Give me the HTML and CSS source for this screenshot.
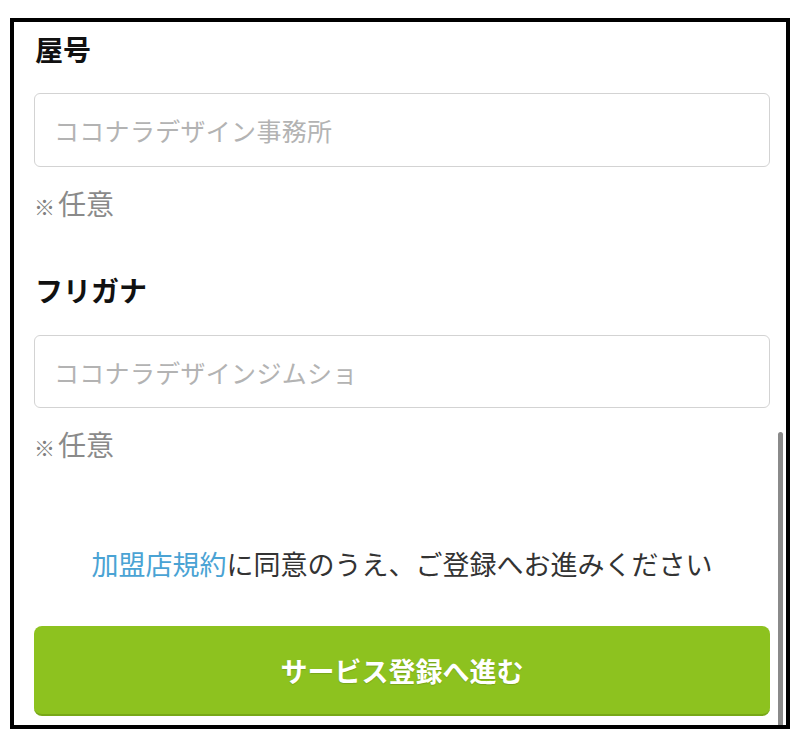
FILE: index.html
```html
<!DOCTYPE html>
<html lang="ja">
<head>
<meta charset="utf-8">
<link rel="stylesheet" href="styles.css">
<title>登録</title>
</head>
<body>
<div class="frame">
  <div class="content">
    <div class="label first">屋号</div>
    <div class="input"><span class="placeholder">ココナラデザイン事務所</span></div>
    <div class="note"><span class="mark">※</span>任意</div>

    <div class="label second">フリガナ</div>
    <div class="input"><span class="placeholder">ココナラデザインジムショ</span></div>
    <div class="note"><span class="mark">※</span>任意</div>

    <p class="terms"><a class="link" href="#">加盟店規約</a>に同意のうえ、ご登録へお進みください</p>
    <div class="button">サービス登録へ進む</div>
  </div>
  <div class="scrollbar"></div>
</div>
</body>
</html>
```
FILE: styles.css
```css
html, body {
  margin: 0;
  padding: 0;
  background: #ffffff;
}
body {
  font-family: "Noto Sans CJK JP", "Noto Sans", sans-serif;
  color: #222;
}
.frame {
  position: relative;
  margin: 18px 0 0 10px;
  width: 772px;
  height: 703px;
  border: 4px solid #000;
  overflow: hidden;
  background: #fff;
}
.content {
  padding: 0 16px 0 20px;
  display: flex;
  flex-direction: column;
}
.label {
  font-size: 28px;
  font-weight: 700;
  line-height: 36px;
  height: 36px;
  color: #111;
  padding-left: 1px;
}
.label.first {
  margin-top: 9px;
}
.label.second {
  margin-top: 49px;
}
.input {
  margin-top: 26px;
  height: 72px;
  border: 1px solid #d3d3d3;
  border-radius: 6px;
  box-sizing: content-box;
  display: flex;
  align-items: center;
  padding-left: 19px;
}
.label.second + .input {
  margin-top: 27px;
  height: 71px;
}
.placeholder {
  font-size: 25px;
  color: #b3b3b3;
  letter-spacing: 0.3px;
}
.note {
  margin-top: 16px;
  height: 40px;
  line-height: 40px;
  font-size: 28px;
  color: #8a8a8a;
}
.mark {
  font-size: 21px;
  font-weight: 700;
  margin-right: 3px;
  color: #808080;
}
.terms {
  margin: 80px 0 0 0;
  text-align: center;
  font-size: 27px;
  line-height: 40px;
  color: #333;
}
.link {
  color: #4aa3d4;
  text-decoration: none;
}
.button {
  margin-top: 42px;
  height: 88px;
  background: #8dc21f;
  border-radius: 8px;
  border-bottom: 2px solid #78a818;
  display: flex;
  align-items: center;
  justify-content: center;
  color: #fff;
  font-size: 27px;
  font-weight: 700;
  text-shadow: 0 1px 1px rgba(0, 0, 0, 0.15);
}
.scrollbar {
  position: absolute;
  right: 3px;
  top: 410px;
  width: 5px;
  height: 320px;
  background: #8a8a8a;
  border-radius: 3px;
}
```
